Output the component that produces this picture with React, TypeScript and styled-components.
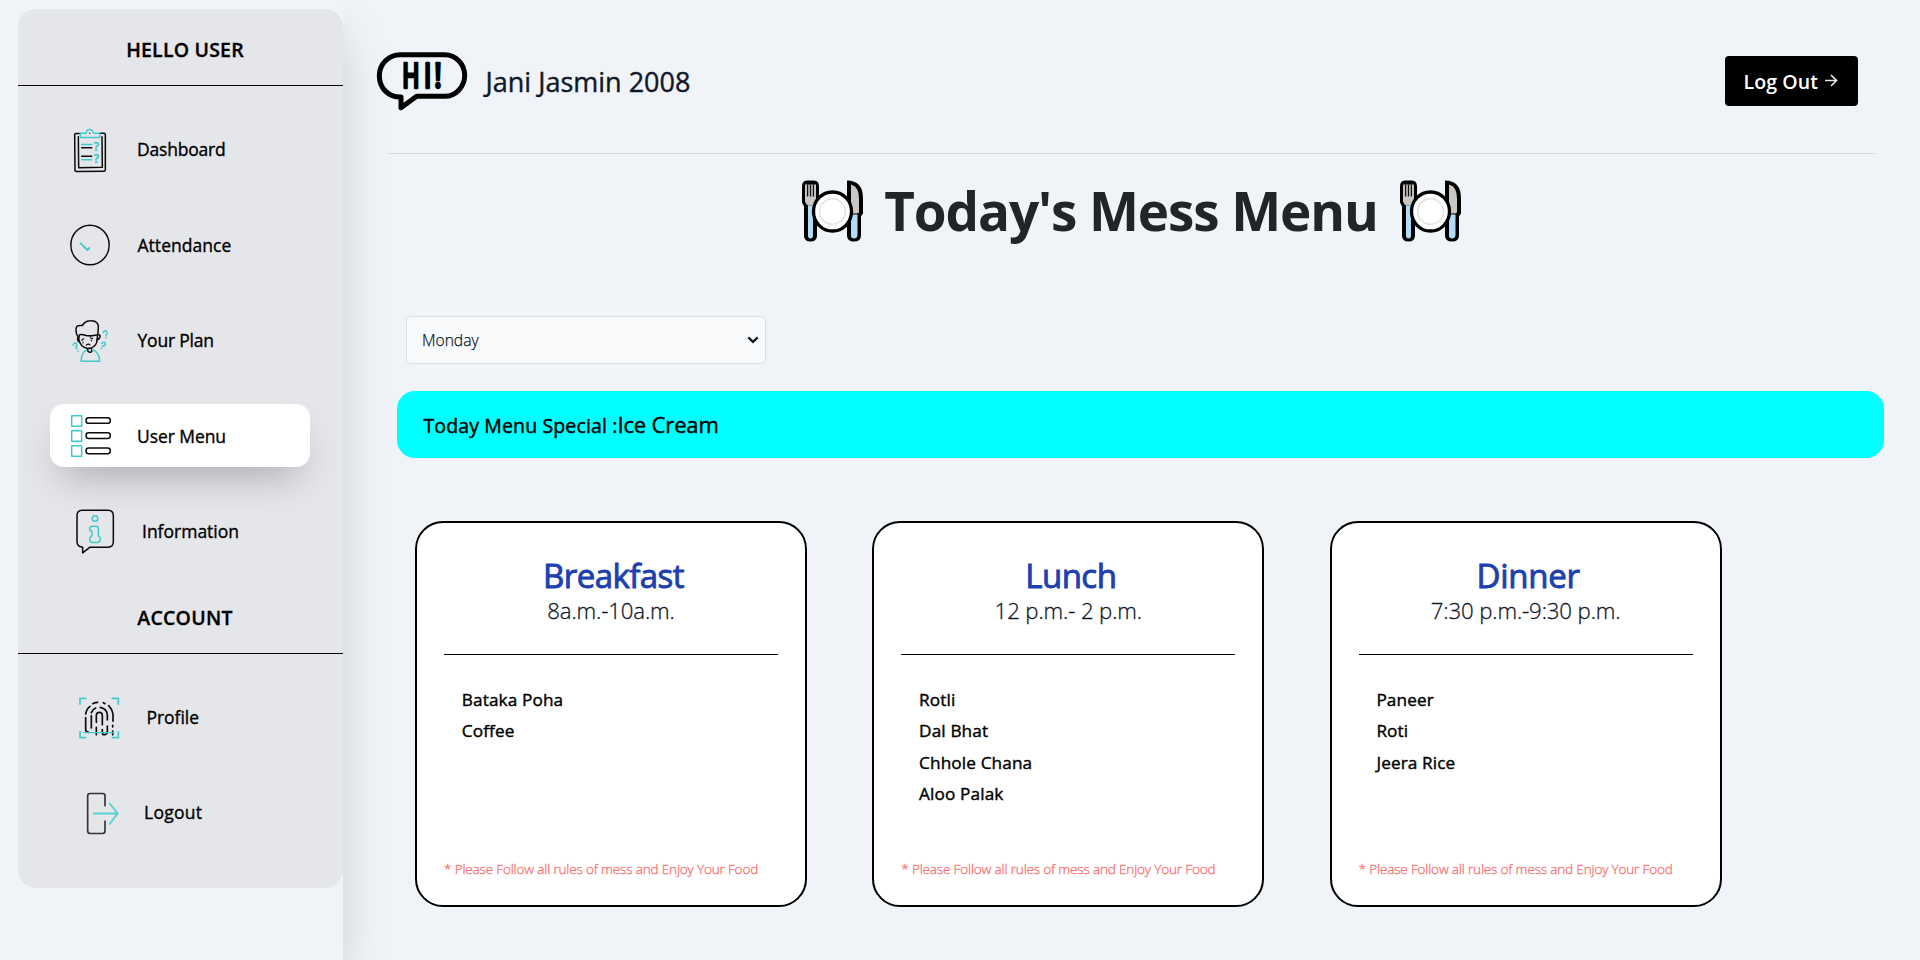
import React from "react";
import styled, { createGlobalStyle } from "styled-components";

const TEAL = "#3fcbcd";
const INK = "#0a0a0a";

const GlobalStyle = createGlobalStyle`
  *, *::before, *::after { box-sizing: border-box; }
  body {
    margin: 0;
    background: #f0f4f9;
    color: #000;
    font-family: "Open Sans", "Noto Sans", sans-serif;
  }
  h1, h2, h3, p, ul { margin: 0; padding: 0; font-weight: inherit; }
  ul { list-style: none; }
`;

const Page = styled.div`
  display: flex;
  height: 960px;
  overflow: hidden;
`;

const Side = styled.aside`
  flex: none;
  width: 343px;
  height: 960px;
  padding: 9px 0 0 18px;
  background: #f0f4f9;
  box-shadow: 0 25px 50px -12px rgba(0, 0, 0, 0.25);
`;

const Panel = styled.nav`
  height: 879px;
  border-radius: 18px;
  background: #e5e6ea;
`;

const GroupTitle = styled.h2<{ $space: number; $track: number }>`
  height: ${(p) => p.$space}px;
  padding: 0 0 22px 9px;
  display: flex;
  align-items: flex-end;
  justify-content: center;
  border-bottom: 1px solid #000;
  font-size: 19.5px;
  font-weight: 600;
  -webkit-text-stroke: 0.3px;
  line-height: 26px;
  letter-spacing: ${(p) => p.$track}px;
`;

const NavList = styled.ul`
  display: flex;
  flex-direction: column;
  gap: 32.5px;
  padding: 31.5px 33px 0 32px;
`;

const NavItem = styled.li<{ $active?: boolean }>`
  display: flex;
  align-items: center;
  height: 63px;
  padding-left: 15px;
  border-radius: 14px;
  background: ${(p) => (p.$active ? "#fff" : "transparent")};
  box-shadow: ${(p) => (p.$active ? "0 20px 38px -12px rgba(0, 0, 0, 0.27)" : "none")};
`;

const NavIcon = styled.svg`
  flex: none;
  width: 60px;
  height: 63px;
  fill: none;
  stroke-width: 4.5;
  stroke-linecap: round;
  stroke-linejoin: round;
`;

const NavLabel = styled.span<{ $gap: number; $track: number }>`
  margin-left: ${(p) => p.$gap}px;
  font-size: 17.5px;
  font-weight: 400;
  -webkit-text-stroke: 0.35px;
  line-height: 24px;
  white-space: nowrap;
  letter-spacing: ${(p) => p.$track}px;
`;

const Main = styled.main`
  flex: 1;
  min-width: 0;
`;

const Header = styled.header`
  display: flex;
  align-items: center;
  height: 154px;
  margin: 0 45px 0 45px;
  padding: 9px 17px 0 0;
  border-bottom: 1px solid #d6dae0;
`;

const Bubble = styled.svg`
  flex: none;
  width: 92px;
  height: 60px;
  margin-left: -12px;
`;

const UserName = styled.p`
  flex: 1;
  margin-left: 17.5px;
  padding-top: 2px;
  color: #111827;
  font-size: 27px;
  font-weight: 400;
  -webkit-text-stroke: 0.4px;
  line-height: 36px;
  letter-spacing: 0;
`;

const LogOutButton = styled.button`
  display: flex;
  align-items: center;
  gap: 6px;
  width: 133px;
  height: 50px;
  padding: 0 0 0 18.5px;
  border: 0;
  border-radius: 4px;
  background: #000;
  color: #fff;
  font: 600 19.5px/26px "Open Sans", "Noto Sans", sans-serif;
  letter-spacing: 0.1px;
  white-space: nowrap;
`;

const ButtonText = styled.span`
  padding-top: 2px;
`;

const TitleRow = styled.div`
  display: flex;
  align-items: center;
  justify-content: center;
  gap: 20px;
  height: 113px;
  padding-right: 1px;
`;

const Title = styled.h1`
  color: #212529;
  font-size: 53px;
  font-weight: 700;
  line-height: 72px;
  letter-spacing: -1.1px;
  white-space: nowrap;
`;

const Plate = styled.svg`
  flex: none;
  width: 64px;
  height: 64px;
`;

const DayPicker = styled.div`
  display: grid;
  align-items: center;
  width: 360px;
  height: 48px;
  margin: 49px 0 0 63px;
`;

const DaySelect = styled.select`
  grid-area: 1 / 1;
  appearance: none;
  width: 100%;
  height: 48px;
  padding: 0 15px;
  border: 1px solid #dbdee4;
  border-radius: 5px;
  background: #f9fafb;
  color: #111827;
  font: 300 15.7px/24px "Open Sans", "Noto Sans", sans-serif;
  -webkit-text-stroke: 0.25px;
  letter-spacing: -0.05px;
`;

const Chevron = styled.svg`
  grid-area: 1 / 1;
  justify-self: end;
  width: 12px;
  height: 8px;
  margin-right: 7px;
  fill: none;
  stroke: #111827;
  stroke-width: 2.3;
  pointer-events: none;
`;

const Special = styled.section`
  display: flex;
  align-items: baseline;
  height: 67px;
  margin: 27px 36px 0 54px;
  padding: 16px 27px 0 26.5px;
  border-radius: 18px;
  background: #00ffff;
  font-size: 19.5px;
  font-weight: 400;
  -webkit-text-stroke: 0.45px;
  line-height: 34px;
  letter-spacing: 0.13px;
  white-space: pre;
`;

const Dish = styled.strong`
  font-size: 22px;
  font-weight: 400;
  letter-spacing: -0.15px;
`;

const Cards = styled.div`
  display: flex;
  gap: 65.3px;
  margin: 63px 0 0 72px;
`;

const Card = styled.article`
  display: flex;
  flex-direction: column;
  width: 392px;
  height: 386px;
  padding: 32px 27px 26px;
  border: 2px solid #000;
  border-radius: 28px;
  background: #fff;
`;

const MealName = styled.h2<{ $track: number }>`
  padding-left: 5px;
  color: #1e40af;
  font-size: 33px;
  font-weight: 400;
  -webkit-text-stroke: 0.9px;
  line-height: 42px;
  text-align: center;
  letter-spacing: ${(p) => p.$track}px;
`;

const MealTime = styled.p`
  height: 58px;
  border-bottom: 1px solid #000;
  color: #111827;
  font-size: 22.2px;
  font-weight: 300;
  -webkit-text-stroke: 0.3px;
  line-height: 28px;
  text-align: center;
  letter-spacing: -0.12px;
`;

const Dishes = styled.ul`
  flex: 1;
  padding: 28.5px 18px 0 17.8px;
  font-size: 17.2px;
  font-weight: 400;
  -webkit-text-stroke: 0.4px;
  line-height: 31.6px;
  letter-spacing: 0.12px;
`;

const Note = styled.p`
  color: #f87171;
  font-size: 13.5px;
  font-weight: 300;
  -webkit-text-stroke: 0.3px;
  line-height: 20px;
  letter-spacing: -0.15px;
  white-space: nowrap;
`;

const Mark = styled.text`
  fill: ${TEAL};
  stroke: ${TEAL};
  stroke-width: 1.5;
  font: 600 35px "Open Sans", sans-serif;
`;

const DashboardIcon = () => (
  <NavIcon viewBox="195 352.5 180 189" stroke={INK}>
    <path d="M238 399H228Q224 399 224 403L225 509Q225 513 229 513L313 512Q316 512 316 508V402Q316 398 312 398H301" />
    <path d="M235 409L236 502L307 500L306 409" />
    <path stroke={TEAL} d="M241 411V398H258Q260 387 269 387Q278 387 280 398H299V411Z" />
    <path stroke={TEAL} d="M245 432H275M245 478H275" />
    <path d="M245 442H275M245 467H275" />
    <circle cx="269" cy="398" r="2" fill={INK} stroke="none" />
    <Mark x="281" y="450">?</Mark>
    <Mark x="281" y="486">?</Mark>
  </NavIcon>
);

const AttendanceIcon = () => (
  <NavIcon viewBox="195 639 180 189" stroke={INK}>
    <ellipse cx="270" cy="735" rx="57.5" ry="59.5" />
    <path stroke={TEAL} strokeWidth="5.5" d="M242 730L262 750L268 744" />
  </NavIcon>
);

const PlanIcon = () => (
  <NavIcon viewBox="195 25.5 180 189" stroke={INK}>
    <path d="M235 110C225 98 226 78 235 76C240 73 244 76 247 75C253 65 261 61 272 61C290 60 296 70 295 82L293 104" />
    <path d="M238 103Q243 100 258 105Q276 108 292 103V114C291 134 279 144 263 144C246 141 239 132 236 114Z" />
    <path d="M294 101Q301 102 300 109Q298 117 291 117M236 111Q232 111 233 117Q234 122 237 124" />
    <path d="M263 145V151Q270 159 275 153V145" />
    <path strokeWidth="3.5" d="M259 134Q265 128 270 133M249 125V127M274 119V121M245 119L251 115M271 112L278 115" />
    <path stroke={TEAL} d="M260 149Q245 155 243 182H299Q298 155 277 148" />
    <path stroke={TEAL} d="M310 96Q312 90 318 91Q323 94 321 100Q317 102 318 106M318 112V112.5M305 129Q311 122 316 128Q317 136 307 138M304 144V144.5M219 134Q222 126 228 128Q234 132 228 139Q229 143 231 146M234 153V153.5" />
  </NavIcon>
);

const MenuIcon = () => (
  <NavIcon viewBox="195 312 180 189" stroke={INK}>
    {[347, 392, 437].map((y, i) => (
      <g key={y}>
        <rect x="215" y={y} width="30" height="32" stroke={TEAL} />
        <rect x="258" y={y + 6 + i / 2} width="73" height="17" rx="8" />
      </g>
    ))}
  </NavIcon>
);

const InfoIcon = () => (
  <NavIcon viewBox="195 598.5 180 189" stroke={INK}>
    <path d="M247 740Q231 738 231 724V645Q231 629 247 629H324Q340 629 340 645V724Q340 740 324 740H270L248 757V740" />
    <circle cx="285" cy="654" r="8.5" stroke={TEAL} />
    <path stroke={TEAL} d="M277 677H289Q295 677 295 684V706Q301 709 301 716Q300 726 292 726H279Q269 726 269 717Q269 709 276 706V693Q268 691 269 684Q271 677 277 677Z" />
  </NavIcon>
);

const ProfileIcon = () => (
  <NavIcon viewBox="195 315 180 189" stroke={INK}>
    <g strokeWidth="5">
      <path d="M257 402Q260 386 270 379M278 371Q286 367 293 367M310 368L315 371M326 377Q337 388 339 402V424M338 436V441M338 453V464" />
      <path d="M257 413V448Q257 457 266 457M274 407V444M274 398Q279 387 287 384M301 382Q322 387 322 406V420M322 438V456Q321 464 313 464Q307 464 307 458V449" />
      <path d="M289 427V405Q290 397 298 397Q307 397 307 406V434M289 442V464" />
    </g>
    <path stroke={TEAL} strokeWidth="4" d="M252 458H342" />
    <path stroke={TEAL} strokeLinecap="butt" strokeLinejoin="miter" strokeWidth="5" d="M240 374V355H259M335 355H355V374M240 454V473H259M335 473H355V454" />
  </NavIcon>
);

const LogoutIcon = () => (
  <NavIcon viewBox="195 601.5 180 189" stroke="#333338">
    <path strokeWidth="5" d="M315 676V646Q315 639 308 639H270Q263 639 263 646V751Q263 759 270 759H308Q315 759 315 751V722" />
    <path stroke="#55d3d4" strokeWidth="5.5" d="M281 699H352M329 669L353 699L329 730" />
  </NavIcon>
);

const HiBubble = () => (
  <Bubble viewBox="48 63 276 180" fill="none" stroke="#000" strokeLinejoin="round">
    <path strokeWidth="15" d="M121 74H254A60 62 0 0 1 314 136A60 63 0 0 1 254 199H170L123 233V201C87 202 58 176 58 137A63 63 0 0 1 121 74Z" />
    <g fill="#000" strokeWidth="7" fontFamily="Open Sans" fontWeight="600" fontSize="101">
      <text transform="translate(126 173) scale(.7 1)">H</text>
      <text transform="translate(191 173) scale(.75 1)">I</text>
      <text transform="translate(223 173) scale(.8 1)">!</text>
    </g>
  </Bubble>
);

const PlateIcon = () => (
  <Plate viewBox="20 18.500 64 64">
    <path fill="#000" d="M27 20H34Q39 20 39 26V42L37 46V75Q37 81 30.500 81Q24 81 24 75V46L22 42V26Q22 20 27 20Z" />
    <path fill="#c9c7c5" d="M25 24H36V41Q35 44 33 45H28Q26 44 25 41Z" />
    <path stroke="#111" strokeWidth="1.300" d="M27.600 24V36M30.500 24V36M33.400 24V36" />
    <path fill="#b1dcf5" d="M28 45H33V75Q33 78 30.500 78Q28 78 28 75Z" />
    <path fill="#000" d="M67 20Q83 20 83 38V53L81 56V75Q81 81 74 81Q67 81 67 75Z" />
    <path fill="#c9c7c5" d="M71 24Q79 26 79 38V52L77 53H71Z" />
    <path fill="#b1dcf5" d="M71 54H77.500V75Q77 78 74 78Q71 78 71 75Z" />
    <ellipse cx="52.500" cy="51" rx="19" ry="19.500" fill="#fff" stroke="#000" strokeWidth="3.300" />
    <ellipse cx="52.500" cy="51" rx="13" ry="12.700" fill="#fff" stroke="#e2e2e2" strokeWidth="1.500" />
  </Plate>
);

const ArrowIcon = () => (
  <svg width="14" height="14" viewBox="0 0 14 14" fill="none" stroke="#e4e4e4" strokeWidth="1.700">
    <path d="M1 6.500H12.500M7 1L12.500 6.500L7 12" />
  </svg>
);

type Entry = { label: string; icon: React.FC; gap: number; track: number; active?: boolean };

const mainLinks: Entry[] = [
  { label: "Dashboard", icon: DashboardIcon, gap: 12, track: -0.2 },
  { label: "Attendance", icon: AttendanceIcon, gap: 12.5, track: 0.03 },
  { label: "Your Plan", icon: PlanIcon, gap: 12.5, track: -0.2 },
  { label: "User Menu", icon: MenuIcon, gap: 12, track: -0.07, active: true },
  { label: "Information", icon: InfoIcon, gap: 17, track: 0 },
];

const accountLinks: Entry[] = [
  { label: "Profile", icon: ProfileIcon, gap: 21.5, track: -0.05 },
  { label: "Logout", icon: LogoutIcon, gap: 19, track: 0.25 },
];

const NavGroup = ({ entries }: { entries: Entry[] }) => (
  <NavList>
    {entries.map(({ label, icon: Icon, gap, track, active }) => (
      <NavItem key={label} $active={active}>
        <Icon />
        <NavLabel $gap={gap} $track={track}>{label}</NavLabel>
      </NavItem>
    ))}
  </NavList>
);

const meals = [
  { name: "Breakfast", time: "8a.m.-10a.m.", track: -0.55, dishes: ["Bataka Poha", "Coffee"] },
  { name: "Lunch", time: "12 p.m.- 2 p.m.", track: -0.5, dishes: ["Rotli", "Dal Bhat", "Chhole Chana", "Aloo Palak"] },
  { name: "Dinner", time: "7:30 p.m.-9:30 p.m.", track: -0.25, dishes: ["Paneer", "Roti", "Jeera Rice"] },
];

export default function App() {
  return (
    <Page>
      <GlobalStyle />
      <Side>
        <Panel>
          <GroupTitle $space={77} $track={0.2}>HELLO USER</GroupTitle>
          <NavGroup entries={mainLinks} />
          <GroupTitle $space={91} $track={0.25}>ACCOUNT</GroupTitle>
          <NavGroup entries={accountLinks} />
        </Panel>
      </Side>
      <Main>
        <Header>
          <HiBubble />
          <UserName>Jani Jasmin 2008</UserName>
          <LogOutButton>
            <ButtonText>Log Out</ButtonText>
            <ArrowIcon />
          </LogOutButton>
        </Header>
        <TitleRow>
          <PlateIcon />
          <Title>Today's Mess Menu</Title>
          <PlateIcon />
        </TitleRow>
        <DayPicker>
          <DaySelect defaultValue="Monday">
            <option>Monday</option>
            <option>Tuesday</option>
            <option>Wednesday</option>
            <option>Thursday</option>
            <option>Friday</option>
            <option>Saturday</option>
            <option>Sunday</option>
          </DaySelect>
          <Chevron viewBox="0 0 12 8">
            <path d="M1.300 1.300L6 5.800L10.700 1.300" />
          </Chevron>
        </DayPicker>
        <Special>
          Today Menu Special :<Dish>Ice Cream</Dish>
        </Special>
        <Cards>
          {meals.map((meal) => (
            <Card key={meal.name}>
              <MealName $track={meal.track}>{meal.name}</MealName>
              <MealTime>{meal.time}</MealTime>
              <Dishes>
                {meal.dishes.map((dish) => (
                  <li key={dish}>{dish}</li>
                ))}
              </Dishes>
              <Note>* Please Follow all rules of mess and Enjoy Your Food</Note>
            </Card>
          ))}
        </Cards>
      </Main>
    </Page>
  );
}
